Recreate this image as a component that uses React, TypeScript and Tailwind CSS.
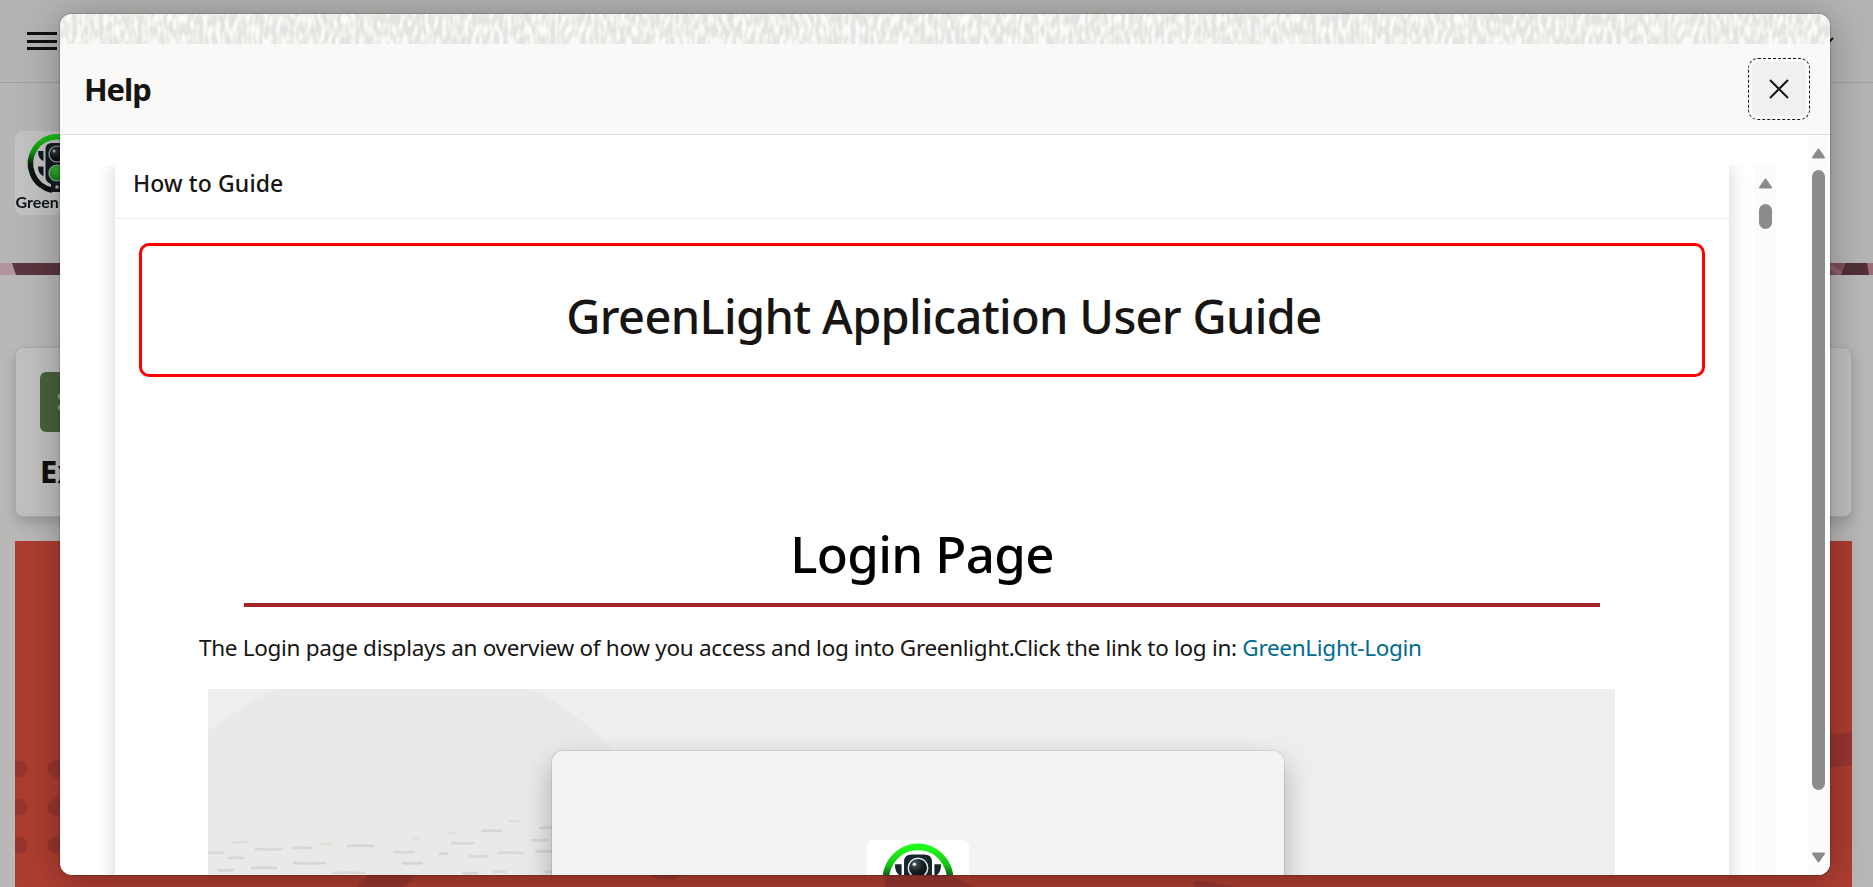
import React from "react";

const dashes: [number, number, number, number][] = [
  [0, 164, 15, 0.8], [24, 153, 14, 0.6], [21, 169, 14, 0.9], [48, 160, 26, 0.8], [85, 159, 19, 0.9], [113, 155, 12, 0.4],
  [140, 157, 25, 1], [186, 163, 20, 0.8], [205, 150, 6, 0.4], [86, 174, 31, 1], [44, 179, 24, 1], [10, 181, 15, 1],
  [125, 184, 31, 0.8], [195, 174, 19, 1], [241, 144, 6, 0.4], [244, 154, 21, 0.9], [274, 142, 19, 1], [302, 132, 10, 0.5],
  [232, 165, 7, 1], [262, 167, 17, 0.8], [290, 164, 25, 0.8], [256, 184, 13, 1], [286, 183, 11, 0.8], [324, 151, 15, 0.9],
  [332, 139, 12, 1], [328, 162, 16, 1], [338, 183, 6, 1],
];

function LogoMark({ className, label }: { className: string; label?: string }) {
  return (
    <svg viewBox="0 0 84 84" className={className}>
      <defs>
        <linearGradient id="ring" x1="0" y1="0" x2="0" y2="1">
          <stop offset="0" stopColor="#22fa1c" />
          <stop offset="0.28" stopColor="#14c514" />
          <stop offset="0.52" stopColor="#10261a" />
          <stop offset="1" stopColor="#0b1316" />
        </linearGradient>
        <radialGradient id="lens" cx="0.35" cy="0.3" r="0.8">
          <stop offset="0" stopColor="#4c585b" />
          <stop offset="0.5" stopColor="#152023" />
          <stop offset="1" stopColor="#050a0c" />
        </radialGradient>
        <radialGradient id="green" cx="0.4" cy="0.3" r="0.8">
          <stop offset="0" stopColor="#4cf04c" />
          <stop offset="1" stopColor="#079a0b" />
        </radialGradient>
      </defs>
      <path d="M37 59.200A26.500 27 0 1 1 47 59.200" fill="none" stroke="url(#ring)" strokeWidth="5.500" />
      <g fill="#17252a">
        <path d="M23 20H28.500V30Q23 28 23 20ZM61 20H55.500V30Q61 28 61 20ZM23 35.500H28.500V45Q23 43 23 35.500ZM61 35.500H55.500V45Q61 43 61 35.500Z" />
        <path d="M30.500 18Q30.500 12 37 12H47Q53.500 12 53.500 18V46Q53.500 51 48 53V61H36V53Q30.500 51 30.500 46Z" />
      </g>
      <circle cx="42" cy="23" r="8" fill="url(#lens)" stroke="#dfe4e5" strokeWidth="1.200" />
      <circle cx="42" cy="42" r="8" fill="url(#green)" stroke="#dfe4e5" strokeWidth="1.200" />
      <circle cx="39" cy="20" r="1.500" fill="#dfe7e8" />
      <circle cx="42" cy="56" r="1.800" fill="#dfe4e5" />
      {label && (
        <text x="0.500" y="77" fontFamily="Lato, sans-serif" fontSize="16" fontWeight="700" fill="#121c20">{label}</text>
      )}
    </svg>
  );
}

function Backdrop() {
  return (
    <div className="flex h-full flex-col bg-[#b9b8b6]">
      <div className="flex h-[83px] shrink-0 items-start justify-between border-b border-[#a1a09e] bg-[#b5b4b2] pt-8">
        <div className="ml-[27px] flex w-[30px] flex-col gap-[5px]">
          <div className="h-[3px] bg-[#12110f]" />
          <div className="h-[3px] bg-[#12110f]" />
          <div className="-mt-px h-[3px] bg-[#12110f]" />
        </div>
        <svg viewBox="0 0 16 10" className="mr-[38px] mt-[5px] h-[10px] w-4">
          <path d="M2 1L8 7L14 1" fill="none" stroke="#12110f" strokeWidth="2" />
        </svg>
      </div>
      <div className="h-[180px] shrink-0 bg-[#b6b5b3] pl-[15px] pt-12">
        <div className="h-[84px] w-[84px] overflow-hidden rounded-lg bg-[#c2c2c2]">
          <LogoMark label="GreenLight" className="h-[84px] w-[84px] brightness-[0.750]" />
        </div>
      </div>
      <svg viewBox="0 0 1873 12" className="h-3 w-full shrink-0">
        <path d="M0 0H1873V12H0Z" fill="#5b353f" />
        <path d="M0 0H12L16 12H0Z" fill="#b2949d" />
        <path d="M1820 0H1846L1841 12H1820Z" fill="#7d4d59" />
        <path d="M1830 1L1843 9L1841 12H1837L1830 6Z" fill="#8d606b" />
        <path d="M1846 0H1867L1869 12H1841Z" fill="#502f38" />
        <path d="M1867 0H1873V12H1869Z" fill="#9a6d79" />
      </svg>
      <div className="flex grow flex-col px-[15px] pr-[21px] pt-[72px]">
        <div className="flex h-[170px] shrink-0 flex-col items-start rounded-lg border border-[#a9a9a9] bg-[#c0c0c0] pl-6 pt-6 shadow-[0_6px_12px_rgba(0,0,0,0.160)]">
          <div className="flex h-[60px] w-[60px] items-center justify-center rounded-md bg-[#48623b]">
            <svg viewBox="0 0 24 24" className="h-6 w-6">
              <path d="M4 4a3 2.500 0 0 0 0 5H20M4 15a3 2.500 0 0 0 0 5H20" fill="none" stroke="#8fb3b5" strokeWidth="2" />
            </svg>
          </div>
          <div className="mt-[18px] font-['Noto_Sans'] text-[31px] font-extrabold leading-[42px] text-[#12110f]">Expenses</div>
        </div>
        <div className="mt-6 grow overflow-hidden bg-[#ae3d31]">
          <svg viewBox="0 0 1837 346" className="h-[346px] w-[1837px]">
            <g fill="#98352f">
              {[228, 266, 304].map((y) => (
                <g key={y}>
                  <circle cx="4" cy={y} r="8.500" />
                  <circle cx="41" cy={y} r="8.500" />
                </g>
              ))}
              <path d="M1790 195Q1815 194 1837 191V224Q1815 228 1790 225Z" />
              <path d="M341 346L356 331H408L388 346Z M630 331Q652 347 670 331Z M870 331H922Q945 337 958 346H870Z M1179 340Q1200 340 1220 346H1179Z" />
            </g>
          </svg>
        </div>
      </div>
    </div>
  );
}

function Arrow({ down }: { down?: boolean }) {
  return (
    <svg viewBox="0 0 15 11" className={down ? "h-[11px] w-[15px] rotate-180" : "h-[11px] w-[15px]"}>
      <path d="M7.500 1.500L13 9.500H2Z" fill="#8b8b8b" stroke="#8b8b8b" strokeWidth="2" strokeLinejoin="round" />
    </svg>
  );
}

function LoginPreview() {
  return (
    <div className="relative ml-[93px] mt-[24px] h-[186px] w-[1407px] overflow-hidden bg-[#efeeec]">
      <svg viewBox="0 0 1407 186" className="h-[186px] w-[1407px]">
        <path d="M0 42Q30 19 68 0H322Q372 22 410 68V186H0Z" fill="#eae9e7" />
        {dashes.map(([x, y, w, o], i) => (
          <path key={i} d={`M${x} ${y}q${w / 2} ${i % 2 ? 1 : -1} ${w} 0`} stroke="#d6d5d3" strokeWidth="2.600" opacity={o} fill="none" strokeLinecap="round" />
        ))}
      </svg>
      <div className="absolute left-[344px] top-[62px] flex h-[400px] w-[732px] justify-center rounded-[11px] bg-[#f4f3f1] pt-[89px] shadow-[0_0_0_1px_rgba(0,0,0,0.080),0_12px_28px_rgba(0,0,0,0.280)]">
        <div className="h-[102px] w-[102px] rounded-md bg-white">
          <LogoMark className="h-[102px] w-[102px]" />
        </div>
      </div>
    </div>
  );
}

function HelpDialog() {
  return (
    <div className="absolute left-[60px] top-[14px] flex h-[861px] w-[1770px] flex-col overflow-hidden rounded-xl bg-white font-['Noto_Sans',sans-serif] text-[#161513]">
      <svg className="h-[30px] w-full shrink-0">
        <filter id="weave" x="0" y="0" width="100%" height="100%" colorInterpolationFilters="sRGB">
          <feTurbulence type="fractalNoise" baseFrequency="0.230 0.090" numOctaves="1" seed="4" />
          <feColorMatrix values="0 0 0 0 0.900  0 0 0 0 0.895  0 0 0 0 0.885  3.500 0 0 0 -1.150" />
        </filter>
        <rect width="100%" height="100%" fill="#fafaf8" />
        <rect width="100%" height="100%" filter="url(#weave)" />
      </svg>
      <div className="flex h-[91px] shrink-0 items-center justify-between border-b border-[#dfdedd] bg-[#faf9f7] pl-6 pr-5">
        <h1 className="text-[31px] font-bold leading-[40px] tracking-[-1.100px]">Help</h1>
        <div className="flex h-[62px] w-[62px] items-center justify-center rounded-[10px] border border-dashed border-[#161513]">
          <div className="flex h-[54px] w-[54px] items-center justify-center rounded-md bg-[#f1f0ee]">
            <svg viewBox="0 0 20 20" className="h-5 w-5">
              <path d="M1 1L19 19M19 1L1 19" stroke="#161513" strokeWidth="2" />
            </svg>
          </div>
        </div>
      </div>
      <div className="flex min-h-0 grow justify-between">
        <div className="mt-[30px] flex grow overflow-hidden pl-[55px]">
          <div className="h-[900px] w-[1614px] shrink-0 shadow-[0_0_18px_rgba(0,0,0,0.180)]">
            <h2 className="h-[54px] whitespace-nowrap border-b border-[#ebebeb] pl-[18px] text-[23px] font-medium leading-[36px] tracking-[0.120px]">How to Guide</h2>
            <div className="ml-6 mt-6 flex h-[134px] w-[1566px] items-center justify-center rounded-[10px] border-[3px] border-[#ff0000] pl-11 pt-3">
              <div className="whitespace-nowrap text-[47px] font-medium leading-[60px] tracking-[-0.680px]">GreenLight Application User Guide</div>
            </div>
            <div className="ml-[129px] mt-[140px] h-[90px] w-[1356px] whitespace-nowrap border-b-4 border-[#a52428] text-center text-[51px] font-medium leading-[72px] tracking-[-0.650px] text-black">Login Page</div>
            <p className="ml-[84px] mt-[24px] whitespace-nowrap text-[22.500px] leading-[34px] tracking-[-0.300px]">
              The Login page displays an overview of how you access and log into Greenlight.Click the link to log in: <a className="text-[#006b8f]">GreenLight-Login</a>
            </p>
            <LoginPreview />
          </div>
          <div className="ml-[25px] flex w-[23px] shrink-0 flex-col items-center bg-[#fcfcfc] pt-[13px]">
            <Arrow />
            <div className="mt-[15px] h-[25px] w-[13px] rounded-full bg-[#8b8b8b]" />
          </div>
        </div>
        <div className="flex w-[23px] shrink-0 flex-col items-center bg-[#fcfcfc] pt-[13px]">
          <Arrow />
          <div className="mt-[11px] h-[620px] w-[13px] rounded-full bg-[#8b8b8b]" />
          <div className="mt-[62px]"><Arrow down /></div>
        </div>
      </div>
    </div>
  );
}

export default function App() {
  return (
    <div className="relative h-[887px] w-[1873px] overflow-hidden">
      <Backdrop />
      <div className="absolute left-[60px] top-[14px] h-[861px] w-[1770px] rounded-xl shadow-[0_0_2px_rgba(0,0,0,0.500),0_4px_40px_rgba(0,0,0,0.300)]" />
      <HelpDialog />
    </div>
  );
}
